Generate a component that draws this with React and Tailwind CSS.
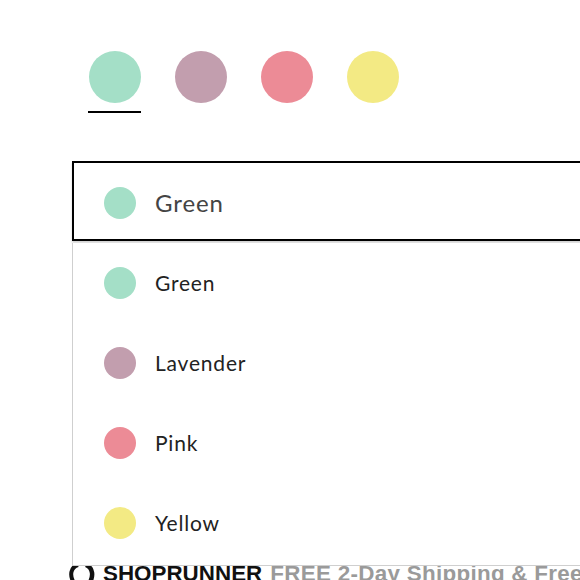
import React, { useState } from "react";

const colors = [
  { name: "Green", swatch: "bg-[#a4dfc7]" },
  { name: "Lavender", swatch: "bg-[#c29eae]" },
  { name: "Pink", swatch: "bg-[#ec8b96]" },
  { name: "Yellow", swatch: "bg-[#f3ea84]" },
];

const ShopRunnerMark = () => (
  <svg width="30" height="22" viewBox="0 0 30 22" className="shrink-0">
    <path d="M9 2 C2 4 0 12 5 20" stroke="#111" strokeWidth="4" fill="none" />
    <path d="M17 2 C24 5 25 13 20 21" stroke="#111" strokeWidth="4.5" fill="none" />
  </svg>
);

const App = () => {
  const [selected, setSelected] = useState(0);

  return (
    <div
      className="relative w-[580px] h-[580px] overflow-hidden bg-white"
      style={{ fontFamily: "Lato, 'Noto Sans', sans-serif" }}
    >
      {/* swatches */}
      <div className="flex gap-[33px] pl-[88px] pt-[51px]">
        {colors.map((c, i) => (
          <button key={c.name} onClick={() => setSelected(i)} className="flex flex-col items-center">
            <span className={`block w-[52px] h-[52px] rounded-full ${c.swatch} blur-[0.4px]`} />
            <span className={`block mt-[8px] h-[2px] w-[53px] ${i === selected ? "bg-black" : "bg-transparent"}`} />
          </button>
        ))}
      </div>

      {/* select */}
      <div className="relative ml-[72px] mt-[48px] w-[560px]">
        <div className="flex items-center h-[80px] border-2 border-black bg-white pl-[30px] pt-[4px] shadow-[0_2px_2px_rgba(0,0,0,0.18)]">
          <span className={`w-[32px] h-[32px] rounded-full ${colors[selected].swatch}`} />
          <span className="ml-[19px] text-[24px] text-[#444] tracking-[0.9px]">{colors[selected].name}</span>
        </div>

        <ul className="absolute z-10 left-0 top-[82px] w-full bg-white border-l border-b border-[#cfcfcf] pb-[2px]">
          {colors.map((c, i) => (
            <li
              key={c.name}
              onClick={() => setSelected(i)}
              className="flex items-center h-[80px] pl-[31px] cursor-pointer"
            >
              <span className={`w-[32px] h-[32px] rounded-full ${c.swatch}`} />
              <span className="ml-[19px] text-[21px] text-[#222] tracking-[0.8px]">{c.name}</span>
            </li>
          ))}
        </ul>
      </div>

      {/* shoprunner bar */}
      <div
        className="flex items-center gap-[4px] ml-[69px] mt-[322px] whitespace-nowrap text-[22.4px] font-bold leading-none"
        style={{ fontFamily: "'Liberation Sans', Arial, sans-serif" }}
      >
        <ShopRunnerMark />
        <span className="text-[#111]">SHOPRUNNER</span>
        <span className="ml-[4px] text-[#9a9a9a] tracking-[0.3px]">FREE 2-Day Shipping &amp; Free Returns</span>
      </div>
    </div>
  );
};

export default App;
